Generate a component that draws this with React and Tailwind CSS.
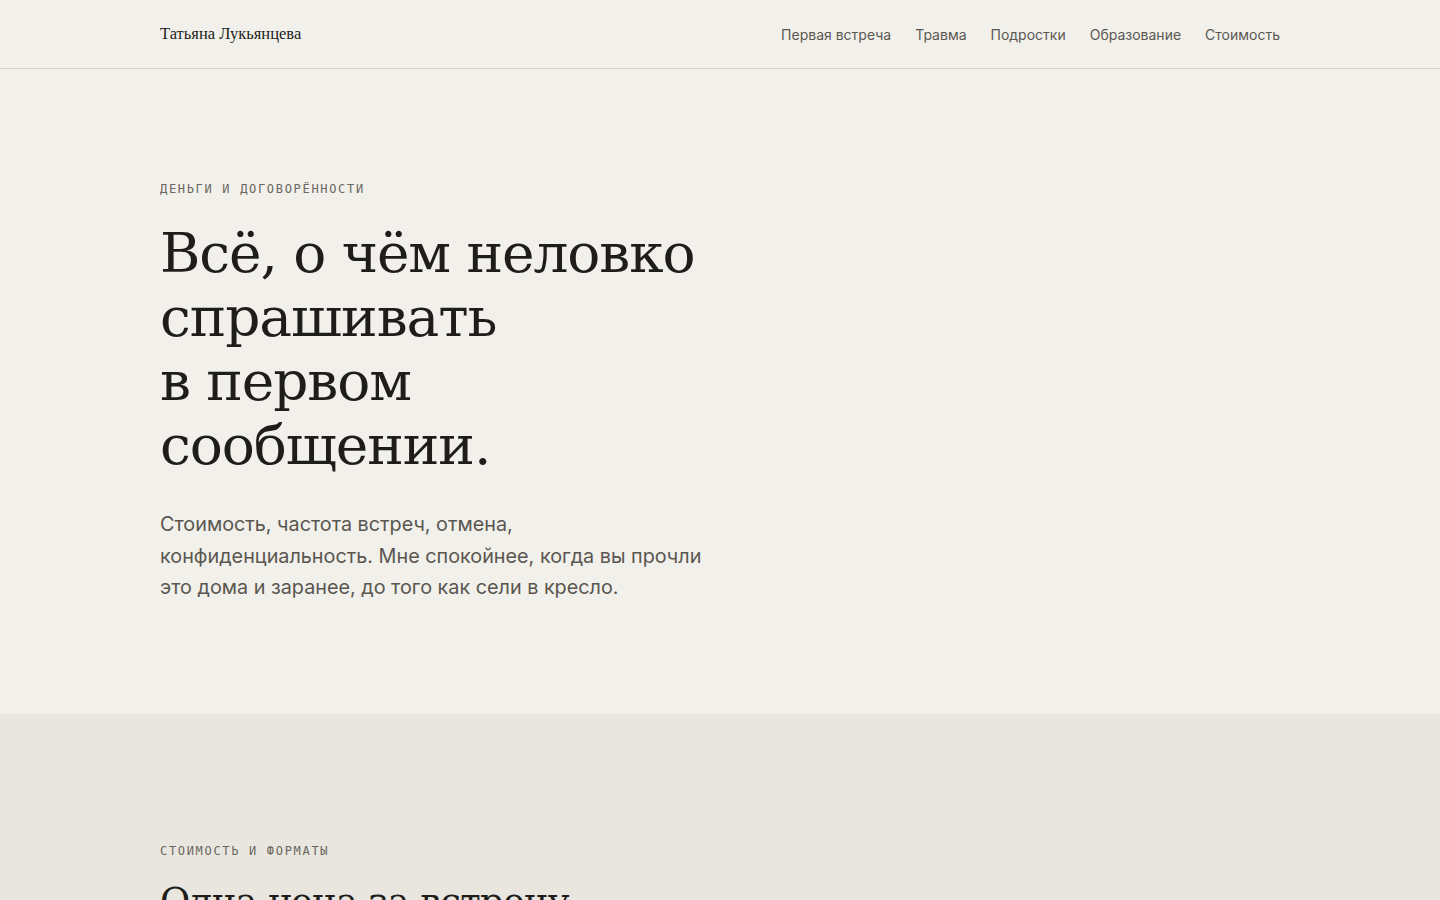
export default function App() {
  const nav = ['Первая встреча', 'Травма', 'Подростки', 'Образование', 'Стоимость']

  return (
    <div className="min-h-screen bg-[#f1f0eb] text-[#1f1d1a]">
      <header className="border-b border-[#d6d3cc]">
        <div className="mx-auto flex h-[68px] max-w-[1120px] items-center justify-between">
          <a className="font-['Liberation_Serif',serif] text-[16.5px] text-[#1f1d1a]">Татьяна Лукьянцева</a>
          <nav className="flex gap-6 font-['Inter',sans-serif] text-[14px] text-[#5b5852]">
            {nav.map((item) => (
              <a key={item}>{item}</a>
            ))}
          </nav>
        </div>
      </header>

      <section className="pt-[112px] pb-[110px]">
        <div className="mx-auto max-w-[1120px]">
          <p className="font-['DejaVu_Sans_Mono',monospace] text-[12px] uppercase leading-4 tracking-[0.14em] text-[#6b6760]">
            Деньги и договорённости
          </p>
          <h1 className="mt-[24px] max-w-[560px] font-['DejaVu_Serif',serif] text-[55px] leading-[64px] tracking-[-0.02em] text-[#1f1d1a]">
            Всё, о чём неловко спрашивать
            <br />в первом сообщении.
          </h1>
          <p className="mt-[32px] max-w-[560px] font-['Inter',sans-serif] text-[19.8px] leading-[31.5px] text-[#5a5650]">
            Стоимость, частота встреч, отмена, конфиденциальность. Мне спокойнее, когда вы прочли это дома и заранее, до того как сели в кресло.
          </p>
        </div>
      </section>

      <section className="bg-[#e9e6df] pt-[129px] pb-24">
        <div className="mx-auto max-w-[1120px]">
          <p className="font-['DejaVu_Sans_Mono',monospace] text-[12px] uppercase leading-4 tracking-[0.14em] text-[#6b6760]">
            Стоимость и форматы
          </p>
          <h2 className="mt-[20px] font-['DejaVu_Serif',serif] text-[37px] leading-[46px] tracking-[-0.02em] text-[#1f1d1a]">
            Одна цена за встречу
          </h2>
        </div>
      </section>
    </div>
  )
}
